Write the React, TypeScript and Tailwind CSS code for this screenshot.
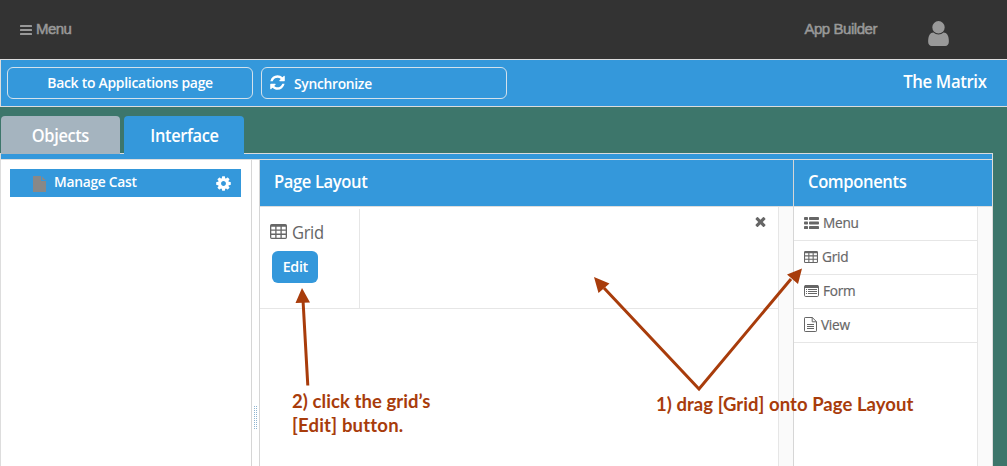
import type { ReactNode } from "react";

function Glyph({ d, className }: { d: string; className: string }) {
  return (
    <svg viewBox="0 0 1792 1792" fill="currentColor" className={`shrink-0 ${className}`}>
      <path d={d} />
    </svg>
  );
}

const REFRESH =
  "M1639 1056q0 5-1 7-64 268-268 434.5t-478 166.5q-146 0-282.5-55t-243.5-157l-129 129q-19 19-45 19t-45-19-19-45v-448q0-26 19-45t45-19h448q26 0 45 19t19 45-19 45l-137 137q71 66 161 102t187 36q134 0 250-65t186-179q11-17 53-117 8-23 30-23h192q13 0 22.5 9.5t9.5 22.5zm25-800v448q0 26-19 45t-45 19h-448q-26 0-45-19t-19-45 19-45l138-138q-148-137-349-137-134 0-250 65t-186 179q-11 17-53 117-8 23-30 23h-199q-13 0-22.5-9.5t-9.5-22.5v-7q65-268 270-434.5t480-166.5q146 0 284 55.5t245 156.5l130-129q19-19 45-19t45 19 19 45z";
const USER =
  "M1536 1399q0 109-62.5 187t-150.5 78h-854q-88 0-150.5-78t-62.5-187q0-85 8.5-160.5t31.5-152 58.5-131 94-89 134.5-34.5q131 128 313 128t313-128q76 0 134.5 34.5t94 89 58.5 131 31.5 152 8.5 160.5zm-256-887q0 159-112.5 271.5t-271.5 112.5-271.5-112.5-112.5-271.5 112.5-271.5 271.5-112.5 271.5 112.5 112.5 271.5z";
const COG =
  "M1152 896q0-106-75-181t-181-75-181 75-75 181 75 181 181 75 181-75 75-181zm512-109v222q0 12-8 23t-20 13l-185 28q-19 54-39 91 35 50 107 138 10 12 10 25t-9 23q-27 37-99 108t-94 71q-12 0-26-9l-138-108q-44 23-91 38-16 136-29 186-7 28-36 28h-222q-14 0-24.5-8.5t-11.5-21.5l-28-184q-49-16-90-37l-141 107q-10 9-25 9-14 0-25-11-126-114-165-168-7-10-7-23 0-12 8-23 15-21 51-66.5t54-70.5q-27-50-41-99l-183-27q-13-2-21-12.5t-8-23.5v-222q0-12 8-23t19-13l186-28q14-46 39-92-40-57-107-138-10-12-10-24 0-10 9-23 26-36 98.5-107.5t94.5-71.5q13 0 26 10l138 107q44-23 91-38 16-136 29-186 7-28 36-28h222q14 0 24.5 8.5t11.5 21.5l28 184q49 16 90 37l142-107q9-9 24-9 13 0 25 10 129 119 165 170 7 8 7 22 0 12-8 23-15 21-51 66.5t-54 70.5q26 50 41 98l183 28q13 2 21 12.5t8 23.5z";
const TIMES =
  "M1490 1322q0 40-28 68l-136 136q-28 28-68 28t-68-28l-294-294-294 294q-28 28-68 28t-68-28l-136-136q-28-28-28-68t28-68l294-294-294-294q-28-28-28-68t28-68l136-136q28-28 68-28t68 28l294 294 294-294q28-28 68-28t68 28l136 136q28 28 28 68t-28 68l-294 294 294 294q28 28 28 68z";

function BarsIcon() {
  return (
    <svg viewBox="0 0 12 10" className="h-[10px] w-3" fill="currentColor">
      <rect width="12" height="2" rx=".5" />
      <rect y="4" width="12" height="2" rx=".5" />
      <rect y="8" width="12" height="2" rx=".5" />
    </svg>
  );
}

function TableIcon({ className }: { className: string }) {
  return (
    <svg viewBox="0 0 1664 1408" preserveAspectRatio="none" className={`shrink-0 ${className}`} fill="currentColor" fillRule="evenodd">
      <path d="M160 0H1504Q1664 0 1664 160V1248Q1664 1408 1504 1408H160Q0 1408 0 1248V160Q0 0 160 0ZM128 256V512H512V256ZM640 256V512H1024V256ZM1152 256V512H1536V256ZM128 640V896H512V640ZM640 640V896H1024V640ZM1152 640V896H1536V640ZM128 1024V1280H512V1024ZM640 1024V1280H1024V1024ZM1152 1024V1280H1536V1024Z" />
    </svg>
  );
}

function ListIcon() {
  return (
    <svg viewBox="0 0 15 12" className="h-3 w-[15px] shrink-0" fill="currentColor">
      {[0, 4.5, 9].map((y) => (
        <g key={y}>
          <rect y={y} width="4" height="3.1" rx=".8" />
          <rect x="5" y={y} width="10" height="3.1" rx=".8" />
        </g>
      ))}
    </svg>
  );
}

function FormIcon() {
  return (
    <svg viewBox="0 0 15 12" className="h-3 w-[15px] shrink-0">
      <rect x=".5" y=".5" width="14" height="11" rx="1.2" fill="none" stroke="currentColor" />
      <path d="M1 0h13l1 3H0z" fill="currentColor" />
      <path d="M2 4.5h1M4 4.5h9M2 6.5h1M4 6.5h9M2 8.5h1M4 8.5h9" stroke="currentColor" />
    </svg>
  );
}

function PageIcon() {
  return (
    <svg viewBox="0 0 13 15" className="h-[15px] w-[13px] shrink-0" fill="none" stroke="currentColor">
      <path d="M1.2.5H8.3L12.5 4.7V13.8Q12.5 14.5 11.8 14.5H1.2Q.5 14.5.5 13.8V1.2Q.5.5 1.2.5ZM8.2.5V4.8H12.5M3 7.5H10M3 9.5H10M3 11.5H10" />
    </svg>
  );
}

function ComponentRow({ icon, children }: { icon: ReactNode; children: ReactNode }) {
  return (
    <div className="flex h-[34px] items-center gap-1 border-b border-[#e6e6e6] pb-[2px] pl-[10px]">
      {icon}
      <span className="origin-left scale-x-[.91] text-[15px] tracking-[-0.3px] whitespace-nowrap [-webkit-text-stroke:0.2px]">
        {children}
      </span>
    </div>
  );
}

function PanelTitle({ children }: { children: ReactNode }) {
  return (
    <h2 className="flex h-[47px] shrink-0 items-center border-b border-[#ddd] bg-[#3498db] pb-[3px] pl-[14px] text-[18px] font-semibold tracking-[-0.4px] text-white">
      <span className="origin-left scale-x-[.92]">{children}</span>
    </h2>
  );
}

function Annotations() {
  return (
    <div className="pointer-events-none absolute inset-0 font-[Lato,sans-serif] text-[18.5px] leading-6 font-bold text-[#a83c0b]">
      <svg viewBox="0 0 1007 466" className="absolute inset-0 h-full w-full" fill="#a83c0b">
        <path d="M307.8 385.5L303 300M604 288L699 389L791 279" fill="none" stroke="#a83c0b" strokeWidth="3" />
        <path d="M302 288L310 302.5L295.5 303ZM594 277L609.5 283.5L598.5 293ZM802 268.5L798 284L787 274.5Z" />
      </svg>
      <div className="absolute top-[389px] left-[292px] whitespace-nowrap">
        <div className="tracking-[0.07px]">2) click the grid’s</div>
        <div className="tracking-[0.2px]">[Edit] button.</div>
      </div>
      <div className="absolute top-[392px] left-[656px] tracking-[0.05px] whitespace-nowrap">
        1) drag [Grid] onto Page Layout
      </div>
    </div>
  );
}

export default function App() {
  return (
    <div className="relative flex h-[466px] w-[1007px] flex-col overflow-hidden bg-[#3d766b] font-['Open_Sans',sans-serif]">
      <header className="flex h-[59px] shrink-0 items-center bg-[#333] pl-5 font-['Liberation_Sans',sans-serif] text-[15px] text-[#999]">
        <BarsIcon />
        <span className="ml-1 tracking-[-0.6px] [-webkit-text-stroke:0.5px]">Menu</span>
        <span className="ml-auto tracking-[-0.45px] [-webkit-text-stroke:0.5px]">App Builder</span>
        <Glyph d={USER} className="mt-[7px] mr-[53px] ml-[46px] h-[29px] w-[31px]" />
      </header>

      <div className="flex h-12 shrink-0 items-center gap-2 border-y border-l border-[#ddd] bg-[#3498db] pl-[6px] text-[15px] font-semibold text-white">
        <button className="h-8 w-[246px] rounded-md border border-[#d4e2ec] pb-px tracking-[-0.3px] whitespace-nowrap">
          <span className="inline-block scale-x-[.93]">Back to Applications page</span>
        </button>
        <button className="flex h-8 w-[246px] items-center rounded-md border border-[#d4e2ec] pl-[7px]">
          <Glyph d={REFRESH} className="mb-px h-[17px] w-[17px]" />
          <span className="ml-2 origin-left scale-x-[.92] tracking-[-0.3px]">Synchronize</span>
        </button>
        <span className="mr-[21px] mb-[3px] ml-auto origin-right scale-x-[.93] text-[18px] tracking-[-0.4px]">
          The Matrix
        </span>
      </div>

      <nav className="z-10 -mb-px flex h-[47px] shrink-0 items-end gap-1 pl-px text-[18px] font-semibold tracking-[-0.4px] text-white">
        <div className="flex h-[38px] w-[119px] items-center justify-center rounded-t bg-[#a5b4bf]">
          <span className="scale-x-[.91]">Objects</span>
        </div>
        <div className="flex h-[38px] w-[120px] items-center justify-center rounded-t bg-[#3498db]">
          <span className="scale-x-[.91]">Interface</span>
        </div>
      </nav>

      <main className="flex min-h-0 w-[993px] flex-1 flex-col border-x border-t border-[#ddd] bg-white text-[#666]">
        <div className="h-[6px] shrink-0 border-b border-[#ddd] bg-[#3498db]" />
        <div className="flex min-h-0 flex-1">
          <aside className="w-[251px] border-r border-[#d6d6d6] px-[9px] pt-[9px]">
            <div className="flex h-7 w-[231px] items-center bg-[#3498db] pr-[9px] pl-[23px] text-[15px] font-semibold text-white">
              <svg viewBox="0 0 13 16" className="mt-px h-4 w-[13px] text-[#888]" fill="currentColor">
                <path d="M0 0H8V5H13V16H0ZM9 .5L12.7 4H9Z" />
              </svg>
              <span className="mb-[3px] ml-2 origin-left scale-x-[.92] tracking-[-0.3px]">Manage Cast</span>
              <Glyph d={COG} className="ml-auto h-[17px] w-[17px]" />
            </div>
          </aside>

          <div className="flex w-[7px] flex-col items-center pt-[246px]">
            <svg viewBox="0 0 3 24" className="h-6 w-[3px]" stroke="#8eb4d0">
              <path d="M.5 0V24M2.5 0V24" strokeDasharray="1 1" />
            </svg>
          </div>

          <section className="flex w-[534px] flex-col border-l border-[#d6d6d6]">
            <PanelTitle>Page Layout</PanelTitle>
            <div className="flex flex-1">
              <div className="w-[519px] border-r border-[#e6e6e6]">
                <div className="flex h-[102px] border-b border-[#e6e6e6] pt-[2px]">
                  <div className="w-[100px] border-r border-[#e6e6e6] pl-[10px]">
                    <div className="mt-[11px] flex h-6 items-center gap-[5px]">
                      <TableIcon className="mb-px h-[15px] w-[17px]" />
                      <span className="origin-left scale-x-[.92] text-[18px] tracking-[-0.4px]">Grid</span>
                    </div>
                    <button className="mt-[7px] ml-[2px] h-8 w-[46px] rounded-md bg-[#3498db] pb-px text-[15px] font-semibold tracking-[-0.3px] text-white">
                      <span className="inline-block scale-x-[.95]">Edit</span>
                    </button>
                  </div>
                  <Glyph d={TIMES} className="mt-[5px] mr-[10px] ml-auto h-[15px] w-[15px]" />
                </div>
              </div>
              <div className="flex-1 bg-[#fafafa]" />
            </div>
          </section>

          <section className="flex flex-1 flex-col border-l border-[#d6d6d6]">
            <PanelTitle>Components</PanelTitle>
            <div className="flex flex-1">
              <div className="w-[184px] border-r border-[#e6e6e6]">
                <ComponentRow icon={<ListIcon />}>Menu</ComponentRow>
                <ComponentRow icon={<TableIcon className="h-3 w-[14px]" />}>Grid</ComponentRow>
                <ComponentRow icon={<FormIcon />}>Form</ComponentRow>
                <ComponentRow icon={<PageIcon />}>View</ComponentRow>
              </div>
              <div className="flex-1 bg-[#fafafa]" />
            </div>
          </section>
        </div>
      </main>

      <Annotations />
    </div>
  );
}
